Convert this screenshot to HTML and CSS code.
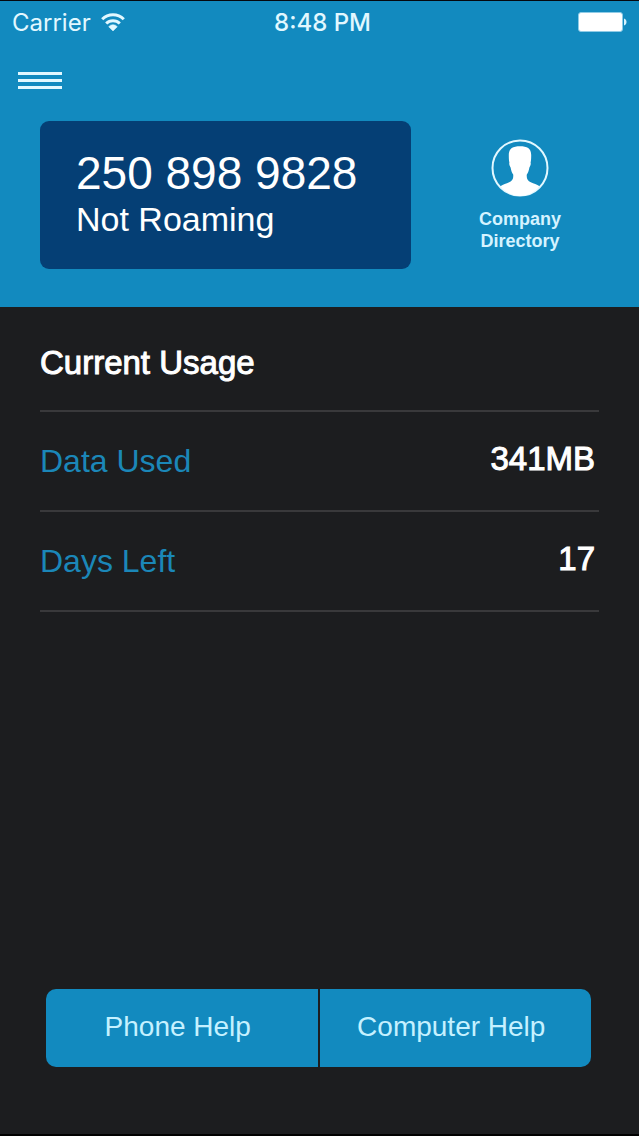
FILE: index.html
```html
<!DOCTYPE html>
<html lang="en">
<head>
<meta charset="utf-8">
<meta name="viewport" content="width=device-width, initial-scale=1">
<title>Current Usage</title>
<link rel="stylesheet" href="styles.css">
</head>
<body>
<div class="app">
  <header class="header">
    <div class="status">
      <div class="status-carrier">
        <span>Carrier</span>
        <svg class="wifi" viewBox="0 0 24 18" aria-hidden="true">
          <path d="M1.200 6.200a15.300 15.300 0 0 1 21.600 0M5.200 10.500a9.600 9.600 0 0 1 13.600 0" fill="none" stroke="currentColor" stroke-width="3"/>
          <path d="M12 18 7.700 13.700a5.500 5.500 0 0 1 8.600 0z" fill="currentColor" stroke="currentColor" stroke-width="0.500"/>
        </svg>
      </div>
      <div class="status-time">8:48 PM</div>
      <svg class="battery" viewBox="0 0 49 20" aria-hidden="true">
        <rect x="0.500" y="0.500" width="44" height="19" rx="2.500" fill="#fff" stroke="#8fcbe6"/>
        <path d="M46 6.500c1.500.5 2.500 1.800 2.500 3.500s-1 3-2.500 3.500z" fill="#d5f3ff"/>
      </svg>
    </div>
    <button class="menu" type="button" aria-label="Menu">
      <span class="menu-bar"></span>
      <span class="menu-bar"></span>
      <span class="menu-bar"></span>
    </button>
    <div class="summary">
      <div class="card">
        <div class="card-number">250 898 9828</div>
        <div class="card-status">Not Roaming</div>
      </div>
      <a class="directory" href="#directory">
        <svg class="avatar" viewBox="0 0 58 58" aria-hidden="true">
          <circle cx="29" cy="29" r="27.500" fill="none" stroke="#e2f8ff" stroke-width="2"/>
          <path d="M29 7.200c7 0 11.200 2 11.200 8.800 0 3-.1 5.500-.6 7.500.5 1.500-.2 3.500-1.200 5-.6 3.500-1.400 5.500-2.600 7-.4 4.500.8 6.200 4 7.800 3 1.300 6 2 8.800 4C44 53 37 57 29 57S14 53 9.400 47.300c2.800-2 5.800-2.700 8.800-4 3.200-1.600 4.400-3.300 4-7.800-1.200-1.500-2-3.500-2.600-7-1-1.500-1.700-3.500-1.200-5-.5-2-.6-4.500-.6-7.500 0-6.800 4.200-8.800 11.200-8.800z" fill="#fff"/>
        </svg>
        <span class="directory-label">Company<br>Directory</span>
      </a>
    </div>
  </header>
  <main class="usage">
    <h1 class="usage-title">Current Usage</h1>
    <table class="usage-table">
      <tbody>
        <tr><th scope="row">Data Used</th><td>341MB</td></tr>
        <tr><th scope="row">Days Left</th><td>17</td></tr>
      </tbody>
    </table>
  </main>
  <nav class="help" aria-label="Help">
    <button class="help-button" type="button">Phone Help</button>
    <button class="help-button" type="button">Computer Help</button>
  </nav>
</div>
</body>
</html>
```
FILE: styles.css
```css
* {
  box-sizing: border-box;
}

body {
  margin: 0;
  background: #1c1d1f;
  color: #fff;
  font-family: "Liberation Sans", Arial, sans-serif;
}

button {
  border: 0;
  padding: 0;
  font: inherit;
  color: inherit;
  cursor: pointer;
}

.app {
  display: flex;
  flex-direction: column;
  min-height: 100vh;
  border-top: 1px solid #05080f;
  border-bottom: 2px solid #000;
}

.header {
  padding-bottom: 38px;
  background: #128abf;
}

.status {
  display: grid;
  grid-template-columns: 1fr auto 1fr;
  align-items: center;
  height: 42px;
  padding: 0 12px;
  font-family: Inter, Roboto, sans-serif;
  font-size: 24px;
  color: #e2f8ff;
}

.status-carrier {
  display: flex;
  align-items: center;
  gap: 10px;
}

.wifi {
  width: 24px;
  height: 18px;
}

.status-time {
  padding-left: 6px;
  font-weight: 500;
}

.battery {
  justify-self: end;
  width: 49px;
  height: 20px;
}

.menu {
  display: flex;
  flex-direction: column;
  gap: 4px;
  width: 44px;
  margin: 29px 18px 32px;
  background: none;
}

.menu-bar {
  width: 100%;
  height: 3px;
  background: #e2f8ff;
}

.summary {
  display: flex;
  gap: 30px;
  padding: 0 40px;
}

.card {
  flex: 1;
  padding: 26px 36px 30px;
  border-radius: 9px;
  background: #053f75;
}

.card-number {
  font-size: 46px;
  line-height: 52px;
}

.card-status {
  font-size: 34px;
  line-height: 40px;
}

.directory {
  display: flex;
  flex-direction: column;
  align-items: center;
  gap: 11px;
  width: 158px;
  padding-top: 18px;
  color: #d5f3ff;
  text-decoration: none;
}

.avatar {
  width: 58px;
  height: 58px;
}

.directory-label {
  font-size: 18px;
  font-weight: 700;
  line-height: 22px;
  text-align: center;
}

.usage {
  flex: 1;
  padding: 0 40px;
}

.usage-title {
  margin: 0;
  padding: 36px 0 27px;
  border-bottom: 2px solid #39393b;
  font-size: 33px;
  font-weight: 400;
  line-height: 40px;
  -webkit-text-stroke: 1px currentColor;
}

.usage-table {
  width: 100%;
  border-spacing: 0;
  font-size: 32px;
  line-height: 40px;
}

.usage-table th,
.usage-table td {
  height: 100px;
  border-bottom: 2px solid #39393b;
}

.usage-table th {
  padding: 0;
  color: #1b87b8;
  font-weight: 400;
  text-align: left;
}

.usage-table td {
  padding: 0 4px 4px 0;
  font-size: 33px;
  text-align: right;
  -webkit-text-stroke: 1px currentColor;
}

.help {
  display: grid;
  grid-template-columns: 1fr 1fr;
  gap: 2px;
  margin: 0 48px 67px 46px;
  border-radius: 10px;
  overflow: hidden;
}

.help-button {
  height: 78px;
  padding: 0 8px 3px 0;
  background: #128abf;
  color: #c5f1ff;
  font-size: 28px;
}
```
